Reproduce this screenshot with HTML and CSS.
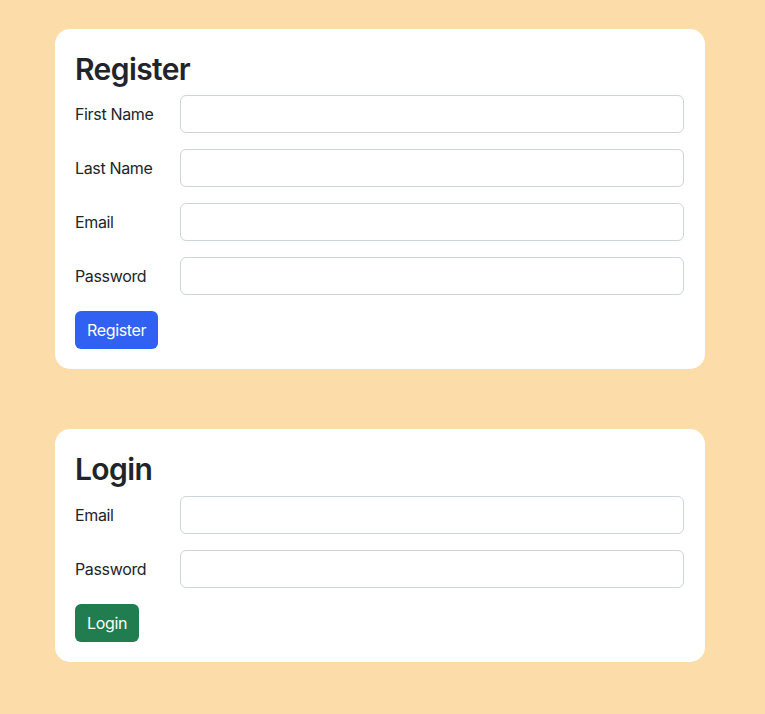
FILE: index.html
```html
<!DOCTYPE html>
<html>
<head>
<meta charset="utf-8">
<link rel="stylesheet" href="styles.css">
</head>
<body>
<div class="page">
  <section class="card">
    <h2 class="title">Register</h2>
    <div class="row"><label class="label">First Name</label><input class="input" type="text"></div>
    <div class="row"><label class="label">Last Name</label><input class="input" type="text"></div>
    <div class="row"><label class="label">Email</label><input class="input" type="email"></div>
    <div class="row"><label class="label">Password</label><input class="input" type="password"></div>
    <button class="btn btn-primary">Register</button>
  </section>
  <section class="card">
    <h2 class="title">Login</h2>
    <div class="row"><label class="label">Email</label><input class="input" type="email"></div>
    <div class="row"><label class="label">Password</label><input class="input" type="password"></div>
    <button class="btn btn-success">Login</button>
  </section>
</div>
</body>
</html>
```
FILE: styles.css
```css
html, body {
  margin: 0;
  padding: 0;
  background: #fcdca8;
  font-family: Inter, "Liberation Sans", sans-serif;
  color: #212529;
  letter-spacing: -0.35px;
}
.page {
  padding: 29px 60px 40px 55px;
  display: flex;
  flex-direction: column;
  gap: 60px;
}
.card {
  width: 650px;
  box-sizing: border-box;
  background: #fff;
  border-radius: 15px;
  padding: 20px;
}
.title {
  margin: 0 0 8px 0;
  font-size: 30px;
  font-weight: 600;
  line-height: 38.4px;
  letter-spacing: -0.6px;
  padding-top: 1px;
  height: 37.4px;
}
.row {
  display: flex;
  align-items: center;
  margin-bottom: 16px;
}
.label {
  width: 105px;
  flex: none;
  font-size: 16px;
}
.input {
  flex: 1;
  height: 38px;
  box-sizing: border-box;
  border: 1px solid #ced4da;
  border-radius: 6px;
  margin-right: 1px;
  font-size: 16px;
  padding: 6px 12px;
}
.btn {
  font-family: inherit;
  letter-spacing: inherit;
  font-size: 16px;
  line-height: 24px;
  padding: 7px 12px;
  border: none;
  border-radius: 6px;
  color: #fff;
}
.btn-primary { background: #3061f3; }
.btn-success { background: #217c4f; }
```
